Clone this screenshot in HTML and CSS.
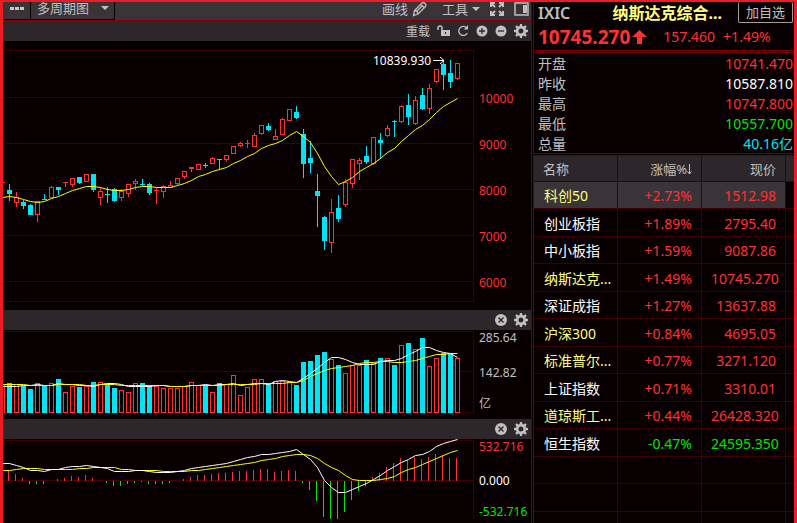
FILE: index.html
```html
<!DOCTYPE html>
<html lang="zh-CN">
<head>
    <meta charset="UTF-8">
    <meta name="viewport" content="width=device-width, initial-scale=1.0">
    <title>IXIC 纳斯达克综合指数</title>
    <link rel="stylesheet" href="styles.css">
</head>
<body>
    <svg class="sprite" aria-hidden="true">
        <symbol id="icon-gear" viewBox="0 0 14 14">
            <path fill="currentColor" fill-rule="evenodd" d="M6 0h2l.4 2 1.2.5L11.300 1.300l1.400 1.400L11.500 4.400l.5 1.200 2 .4v2l-2 .4-.5 1.200 1.200 1.700-1.400 1.400-1.700-1.200-1.200.5L8 14H6l-.4-2-1.200-.5-1.700 1.200-1.400-1.400 1.200-1.700L2 8.400 0 8V6l2-.4.5-1.200L1.300 2.700l1.400-1.400 1.700 1.200L5.600 2zM7 4.500a2.500 2.500 0 1 0 0 5 2.500 2.500 0 0 0 0-5z"/>
        </symbol>
        <symbol id="icon-close" viewBox="0 0 12 12">
            <circle cx="6" cy="6" r="6" fill="currentColor"/>
            <path d="M3.500 3.500l5 5M8.500 3.500l-5 5" stroke="#2d272b" stroke-width="1.400"/>
        </symbol>
    </svg>

    <div class="app">
        <main class="charts">
            <div class="toolbar">
                <button class="more-btn" aria-label="更多"><i></i><i></i><i></i></button>
                <label class="dropdown period">
                    <select aria-label="周期"><option>多周期图</option></select>
                </label>
                <div class="toolbar-right">
                    <button class="tool-btn">画线
                        <svg width="16" height="16" viewBox="0 0 16 16" fill="none" stroke="currentColor" stroke-width="1.300">
                            <path d="M1.500 14.500l1-5 7.500-7.500q1.500-1 3 .5t.5 3l-7.500 7.500zM2.500 9.500q3 0 3.500 3.500M9 3.500l3.500 3.500M4.500 10.500l6-6"/>
                        </svg>
                    </button>
                    <label class="dropdown tools">
                        <select aria-label="工具"><option>工具</option></select>
                    </label>
                    <button class="icon-btn" aria-label="全屏">
                        <svg width="14" height="14" viewBox="0 0 14 14" fill="none" stroke="currentColor" stroke-width="2">
                            <path d="M1 5V1h4M9 1h4v4M13 9v4H9M5 13H1V9M1 1l4 4M13 1L9 5M13 13L9 9M1 13l4-4"/>
                        </svg>
                    </button>
                    <button class="icon-btn" aria-label="侧栏">
                        <svg width="15" height="14" viewBox="0 0 15 14">
                            <path d="M1 1h13v12H1z" fill="none" stroke="currentColor" stroke-width="1.500"/>
                            <path d="M9 3h4v8H9z" fill="currentColor"/>
                        </svg>
                    </button>
                </div>
            </div>

            <div class="pane-head">
                <button class="reload-btn">重载</button>
                <button class="icon-btn" aria-label="解锁">
                    <svg width="13" height="12" viewBox="0 0 13 12">
                        <path d="M1 5V3q0-2 2-2t2 2v2" fill="none" stroke="currentColor" stroke-width="1.500"/>
                        <path d="M4 5h9v6H4z" fill="currentColor"/>
                        <path d="M8 7h1v2H8z" fill="#2d272b"/>
                    </svg>
                </button>
                <button class="icon-btn" aria-label="刷新">
                    <svg width="12" height="12" viewBox="0 0 12 12">
                        <path d="M9.500 2.800A4.500 4.500 0 1 0 10.300 8" fill="none" stroke="currentColor" stroke-width="1.300"/>
                        <path d="M11 0v4.500H6.800z" fill="currentColor"/>
                    </svg>
                </button>
                <button class="icon-btn" aria-label="放大">
                    <svg width="12" height="12" viewBox="0 0 12 12">
                        <circle cx="6" cy="6" r="5.500" fill="currentColor"/>
                        <path d="M3 6h6M6 3v6" stroke="#2d272b" stroke-width="1.300"/>
                    </svg>
                </button>
                <button class="icon-btn" aria-label="缩小">
                    <svg width="12" height="12" viewBox="0 0 12 12">
                        <circle cx="6" cy="6" r="5.500" fill="currentColor"/>
                        <path d="M3 6h6" stroke="#2d272b" stroke-width="1.300"/>
                    </svg>
                </button>
                <button class="icon-btn" aria-label="设置"><svg width="14" height="14"><use href="#icon-gear"/></svg></button>
            </div>
            <div class="pane price-pane">
                <svg class="plot" id="price-plot" viewBox="0 0 471 269" preserveAspectRatio="xMaxYMin meet"></svg>
                <div class="axis price-axis">
                    <span>10000</span>
                    <span>9000</span>
                    <span>8000</span>
                    <span>7000</span>
                    <span>6000</span>
                </div>
            </div>

            <div class="pane-head">
                <button class="icon-btn" aria-label="关闭"><svg width="12" height="12"><use href="#icon-close"/></svg></button>
                <button class="icon-btn" aria-label="设置"><svg width="14" height="14"><use href="#icon-gear"/></svg></button>
            </div>
            <div class="pane volume-pane">
                <svg class="plot" id="volume-plot" viewBox="0 0 471 89" preserveAspectRatio="xMaxYMin meet"></svg>
                <div class="axis volume-axis">
                    <span>285.64</span>
                    <span>142.82</span>
                    <span>亿</span>
                </div>
            </div>

            <div class="pane-head">
                <button class="icon-btn" aria-label="关闭"><svg width="12" height="12"><use href="#icon-close"/></svg></button>
                <button class="icon-btn" aria-label="设置"><svg width="14" height="14"><use href="#icon-gear"/></svg></button>
            </div>
            <div class="pane macd-pane">
                <svg class="plot" id="macd-plot" viewBox="0 0 471 80" preserveAspectRatio="xMaxYMin meet"></svg>
                <div class="axis macd-axis">
                    <span class="up">532.716</span>
                    <span class="flat">0.000</span>
                    <span class="down">-532.716</span>
                </div>
            </div>
        </main>

        <aside class="sidebar">
            <section class="quote">
                <div class="quote-title">
                    <span class="code">IXIC</span>
                    <h1>纳斯达克综合...</h1>
                    <button class="add-btn">加自选</button>
                </div>
                <div class="quote-price up">
                    <strong>10745.270</strong>
                    <svg width="15" height="14" viewBox="0 0 15 14"><path fill="currentColor" d="M7.500 0L15 7h-5v7H5V7H0z"/></svg>
                    <span class="change">157.460</span>
                    <span>+1.49%</span>
                </div>
            </section>

            <dl class="stats">
                <div><dt>开盘</dt><dd class="up">10741.470</dd></div>
                <div><dt>昨收</dt><dd class="flat">10587.810</dd></div>
                <div><dt>最高</dt><dd class="up">10747.800</dd></div>
                <div><dt>最低</dt><dd class="down">10557.700</dd></div>
                <div><dt>总量</dt><dd class="volume">40.16亿</dd></div>
            </dl>

            <div class="list">
                <table>
                    <thead>
                        <tr>
                            <th>名称</th>
                            <th>涨幅%<svg width="5" height="11" viewBox="0 0 5 11" fill="none" stroke="currentColor"><path d="M2.500 0v10M.5 7.500l2 2.500 2-2.500"/></svg></th>
                            <th>现价</th>
                            <th></th>
                        </tr>
                    </thead>
                    <tbody>
                        <tr class="up selected"><td class="fav">科创50</td><td>+2.73%</td><td>1512.98</td><td></td></tr>
                        <tr class="up"><td>创业板指</td><td>+1.89%</td><td>2795.40</td><td></td></tr>
                        <tr class="up"><td>中小板指</td><td>+1.59%</td><td>9087.86</td><td></td></tr>
                        <tr class="up"><td class="fav">纳斯达克...</td><td>+1.49%</td><td class="wide">10745.270</td><td></td></tr>
                        <tr class="up"><td>深证成指</td><td>+1.27%</td><td>13637.88</td><td></td></tr>
                        <tr class="up"><td class="fav">沪深300</td><td>+0.84%</td><td>4695.05</td><td></td></tr>
                        <tr class="up"><td class="fav">标准普尔...</td><td>+0.77%</td><td>3271.120</td><td></td></tr>
                        <tr class="up"><td>上证指数</td><td>+0.71%</td><td>3310.01</td><td></td></tr>
                        <tr class="up"><td class="fav">道琼斯工...</td><td>+0.44%</td><td class="wide">26428.320</td><td></td></tr>
                        <tr class="down"><td>恒生指数</td><td>-0.47%</td><td class="wide">24595.350</td><td></td></tr>
                        <tr><td></td><td></td><td></td><td></td></tr>
                        <tr><td></td><td></td><td></td><td></td></tr>
                        <tr><td></td><td></td><td></td><td></td></tr>
                    </tbody>
                </table>
            </div>
        </aside>
    </div>

    <script src="charts.js"></script>
</body>
</html>
```
FILE: styles.css
```css
* {
    box-sizing: border-box;
    margin: 0;
    padding: 0;
}
body {
    font-family: "Noto Sans", "Noto Sans CJK SC", sans-serif;
    font-size: 14px;
    color: #c0c0c0;
    background-color: #080000;
    min-height: 100vh;
    padding-bottom: 1px;
    display: flex;
}
button, select {
    font: inherit;
    color: inherit;
    background: none;
    border: none;
    cursor: pointer;
}
.sprite {
    display: none;
}
.up {
    color: #ff3232;
}
.down {
    color: #00e600;
}
.flat {
    color: #fff;
}
.volume {
    color: #00e5f5;
}
.app {
    flex: 1;
    display: flex;
    gap: 1px;
    border: 3px solid #ed1c24;
    border-top-width: 2px;
    overflow: hidden;
}

/* charts */
.charts {
    flex: 1;
    min-width: 0;
    border-right: 1px solid #700000;
}
.toolbar {
    display: flex;
    height: 19px;
    background-color: #3a3438;
    border-bottom: 1px solid #8a0000;
    font-size: 13px;
    line-height: 16px;
}
.more-btn {
    display: flex;
    justify-content: center;
    gap: 1px;
    width: 28px;
    padding-top: 5px;
    border-right: 1px solid #000;
    border-bottom: 1px solid #000;
}
.more-btn i {
    width: 4px;
    height: 3px;
    background-color: #c8c8c8;
}
.dropdown {
    display: flex;
    align-items: center;
}
.dropdown select {
    appearance: none;
}
.dropdown::after {
    content: "";
    border: 4px solid transparent;
    border-top-color: #c0c0c0;
    border-bottom: none;
}
.period {
    gap: 11px;
    padding: 0 5px 6px 6px;
    border-right: 1px solid #000;
    border-bottom: 1px solid #000;
}
.tools {
    gap: 3px;
}
.toolbar-right {
    display: flex;
    align-items: center;
    margin-left: auto;
    padding: 0 2px 4px 0;
    gap: 10px;
}
.tool-btn {
    display: flex;
    align-items: center;
    gap: 4px;
    margin-right: 4px;
}
.icon-btn {
    display: flex;
    align-items: center;
    justify-content: center;
}
.pane-head {
    display: flex;
    align-items: center;
    justify-content: flex-end;
    gap: 7px;
    height: 20px;
    padding-right: 3px;
    background-color: #2d272b;
}
.reload-btn {
    font-size: 12px;
}
.pane {
    display: flex;
}
.plot {
    flex: 1;
    min-width: 0;
}
.price-pane {
    height: 269px;
}
.volume-pane {
    height: 89px;
}
.macd-pane {
    height: 80px;
}
.axis {
    width: 57px;
    padding-left: 5px;
    display: grid;
    align-items: center;
    align-content: start;
    font-size: 12px;
    line-height: 16px;
}
.price-axis {
    padding-top: 35px;
    grid-auto-rows: 46px;
    color: #ff3232;
}
.volume-axis {
    grid-template-rows: 16px 54px 8px;
}
.macd-axis {
    grid-template-rows: 16px 52px 10px;
}

/* svg parts */
.grid {
    stroke: #400000;
}
.candle-up {
    fill: #080000;
    stroke: #ff3232;
}
.candle-down {
    fill: #00e5f5;
    stroke: #00e5f5;
}
.bar-up {
    stroke: #ff3232;
}
.bar-down {
    stroke: #00e600;
}
.line-yellow {
    fill: none;
    stroke: #ffff00;
}
.line-white {
    fill: none;
    stroke: #fff;
}
.high-label {
    fill: #fff;
    font-size: 12px;
}
.high-arrow {
    fill: none;
    stroke: #fff;
}

/* sidebar */
.sidebar {
    width: 261px;
    display: flex;
    flex-direction: column;
    gap: 1px;
}
.quote {
    height: 49px;
    border-left: 1px solid #700000;
    border-bottom: 1px solid #700000;
}
.quote-title {
    display: flex;
    align-items: center;
    justify-content: space-between;
    height: 21px;
    padding: 0 1px 0 4px;
}
.code {
    font-size: 16px;
    font-weight: 600;
}
.quote-title h1 {
    flex: 1;
    padding-right: 16px;
    text-align: right;
    font-size: 16px;
    line-height: 20px;
    color: #ffff80;
}
.add-btn {
    width: 55px;
    height: 21px;
    border: 1px solid #a0a0a0;
    border-top: none;
    border-radius: 2px;
    font-size: 13px;
    line-height: 16px;
}
.quote-price {
    display: flex;
    align-items: center;
    height: 27px;
    padding-left: 4px;
}
.quote-price strong {
    margin-right: 2px;
    font-size: 19px;
}
.quote-price .change {
    margin: 0 8px 0 16px;
}
.stats {
    border: 1px solid #700000;
    border-right: none;
}
.stats div {
    display: flex;
    justify-content: space-between;
    height: 20px;
    line-height: 22px;
    padding: 0 1px 0 4px;
}
.list {
    flex: 1;
    border: 1px solid #700000;
    border-width: 1px 0 0 1px;
}
table {
    width: 100%;
    table-layout: fixed;
    border-collapse: separate;
    border-spacing: 0;
}
th, td {
    width: 84px;
    height: 27px;
    padding: 0 9px;
    border-right: 1px solid #400000;
    border-bottom: 1px solid #400000;
    text-align: right;
    font-weight: normal;
    line-height: 20px;
    white-space: nowrap;
}
td {
    padding-top: 2px;
}
th {
    height: 26px;
    font-size: 13px;
    background-color: #2d272b;
}
th svg {
    vertical-align: -1px;
}
th:first-child, td:first-child {
    text-align: left;
}
td:first-child {
    padding-left: 10px;
    padding-right: 0;
    color: #fff;
}
th:last-child, td:last-child {
    width: auto;
    padding: 0;
    border-right: none;
}
tbody tr:nth-child(even) td {
    height: 28px;
}
td.fav:first-child {
    color: #ffff80;
}
td.wide {
    padding-right: 7px;
}
.selected td:not(:last-child) {
    background-color: #3a3438;
}
```
FILE: charts.js
```js
const STEP = 7;
const FIRST = 6;

// [up, high, top, bottom, low]
const candles = [
    [0,143,149,153,160],[1,151,156,162,166],[0,159,161,165,168],[0,163,164,174,174],[1,160,160,174,181],
    [0,153,158,159,159],[1,145,146,157,157],[0,146,146,149,154],[1,141,141,142,146],[1,137,137,144,146],
    [0,136,136,142,143],[1,133,133,141,141],[0,133,133,149,151],[1,147,150,157,164],[0,146,153,154,162],
    [0,147,148,160,161],[1,148,150,157,160],[1,143,143,153,156],[1,138,140,143,149],[0,138,143,144,145],
    [0,142,143,152,154],[1,147,149,150,163],[1,144,145,151,157],[1,140,144,147,147],[1,137,137,143,144],
    [1,130,130,136,138],[1,126,126,128,131],[1,123,123,129,129],[0,122,124,125,127],[1,116,117,123,123],
    [0,118,118,119,129],[1,114,114,119,121],[1,105,105,113,113],[1,101,102,105,106],[1,99,102,103,107],
    [1,92,94,106,106],[1,84,84,93,94],[0,82,85,89,90],[1,88,95,99,99],[1,77,78,94,94],
    [1,68,68,80,80],[0,65,71,77,78],[0,88,93,123,137],[0,100,117,122,132],[0,133,150,155,186],
    [0,175,176,200,209],[1,158,171,202,212],[0,154,167,178,181],[1,138,141,164,166],[1,118,118,143,147],
    [1,117,119,123,139],[0,105,115,121,123],[1,96,96,123,124],[0,92,99,102,118],[1,84,87,95,96],
    [0,79,80,81,96],[1,64,65,81,82],[0,53,64,76,84],[1,55,59,83,84],[0,47,54,68,69],
    [1,43,47,68,73],[1,28,28,41,42],[0,19,23,34,49],[0,19,32,41,47],[1,22,22,38,39]
];
const ma = [156,155,156,158,160,161,160,157,155,152,149,147,145,145,146,148,149,149,148,146,145,145,146,146,
    146,144,142,139,135,133,130,128,126,122,119,115,112,107,104,102,99,94,90,95,101,112,125,135,143,140,136,130,
    126,122,117,111,107,100,94,88,84,78,71,65,61,57];

// bar tops, the baseline is at 83
const volumes = [53,54,56,59,53,56,53,49,62,56,57,56,52,52,54,58,60,62,53,53,56,56,58,58,58,56,52,55,55,62,53,54,
    45,65,57,49,49,54,51,51,52,55,32,31,25,22,29,35,43,35,35,30,33,28,28,35,15,13,19,8,36,28,23,23,28];
const volMa5 = [56,56,56,55,55,54,55,55,53,54,54,55,55,56,54,53,53,54,56,56,56,56,55,55,56,56,56,55,55,54,55,54,
    54,53,55,54,53,53,54,51,50,51,52,48,43,38,32,27,27,29,32,34,34,34,31,30,30,28,24,21,17,17,20,22,23,27];
const volMa10 = [54,54,54,54,55,55,55,55,54,54,54,54,55,55,54,54,54,55,55,55,55,55,55,55,56,56,56,55,55,55,55,55,
    54,54,54,54,54,53,53,53,53,52,52,50,46,43,40,38,37,36,35,33,32,32,31,31,32,32,31,30,28,26,24,24,23,23];

// positive goes up from the zero line at 41
const macd = [10,6,2,-3,-3,-3,0,1,2,4,3,5,2,0,-2,-5,-5,-3,-2,-1,-3,-3,-3,-2,0,1,3,5,5,6,7,7,8,9,9,10,11,11,8,9,
    10,9,-2,-9,-20,-36,-38,-38,-31,-19,-10,-5,3,7,13,17,22,20,23,21,23,26,25,22,22];
const dif = [24,24,26,28,31,31,32,30,30,28,27,27,26,27,28,29,32,32,32,31,31,32,33,33,33,32,31,29,28,27,26,25,24,
    22,20,18,17,15,15,14,13,12,10,15,20,28,41,48,53,53,50,47,44,40,36,31,27,23,20,16,15,12,7,4,2,0];
const dea = [31,31,30,29,29,29,30,30,30,30,30,29,29,28,28,28,28,30,30,31,31,31,31,32,32,32,32,31,31,30,29,28,27,
    26,25,24,23,21,20,19,17,16,15,15,16,19,24,28,31,36,40,41,41,41,40,39,37,33,30,28,25,22,19,16,13,11];

function add(svg, tag, attrs) {
    const el = document.createElementNS('http://www.w3.org/2000/svg', tag);
    for (const name in attrs) el.setAttribute(name, attrs[name]);
    svg.appendChild(el);
    return el;
}

function line(svg, cls, x1, y1, x2, y2) {
    add(svg, 'path', { class: cls, d: `M${x1} ${y1}L${x2} ${y2}` });
}

// the last value always sits on the last candle
function curve(svg, cls, values) {
    const end = FIRST + 64 * STEP + 0.5;
    const d = values.map((v, i) => `${end - (values.length - 1 - i) * STEP} ${v + 0.5}`);
    add(svg, 'path', { class: cls, d: 'M' + d.join('L') });
}

function frame(svg, rows, bottom) {
    rows.forEach(y => line(svg, 'grid', 0, y + 0.5, 471, y + 0.5));
    line(svg, 'grid', 470.5, rows[0], 470.5, bottom);
}

const price = document.getElementById('price-plot');
frame(price, [9, 56, 102, 148, 194, 240, 260], 261);
line(price, 'candle-up', 0, 141.5, 2, 141.5);
candles.forEach(([up, high, top, bottom, low], i) => {
    const x = FIRST + i * STEP;
    const cls = up ? 'candle-up' : 'candle-down';
    line(price, cls, x + 0.5, high, x + 0.5, low);
    add(price, 'rect', { class: cls, x: x - 1.5, y: top + 0.5, width: 4, height: Math.max(bottom - top - 1, 0.01) });
});
curve(price, 'line-yellow', ma);
add(price, 'text', { class: 'high-label', x: 370, y: 24 }).textContent = '10839.930';
add(price, 'path', { class: 'high-arrow', d: 'M430 19.5H441M437 16L441 19.5L437 23' });

const volume = document.getElementById('volume-plot');
frame(volume, [1, 41, 82], 83);
line(volume, 'candle-up', 1.5, 54, 1.5, 83);
volumes.forEach((top, i) => {
    const cls = candles[i][0] ? 'candle-up' : 'candle-down';
    add(volume, 'rect', { class: cls, x: FIRST + i * STEP - 1.5, y: top + 0.5, width: 4, height: 82 - top });
});
curve(volume, 'line-white', volMa5);
curve(volume, 'line-yellow', volMa10);

const macdPlot = document.getElementById('macd-plot');
frame(macdPlot, [1, 41], 80);
macd.forEach((v, i) => {
    const x = FIRST + i * STEP - 0.5;
    if (v > 0) line(macdPlot, 'bar-up', x, 41 - v, x, 42);
    if (v < 0) line(macdPlot, 'bar-down', x, 42, x, 42 - v);
});
curve(macdPlot, 'line-yellow', dea);
curve(macdPlot, 'line-white', dif);
```
